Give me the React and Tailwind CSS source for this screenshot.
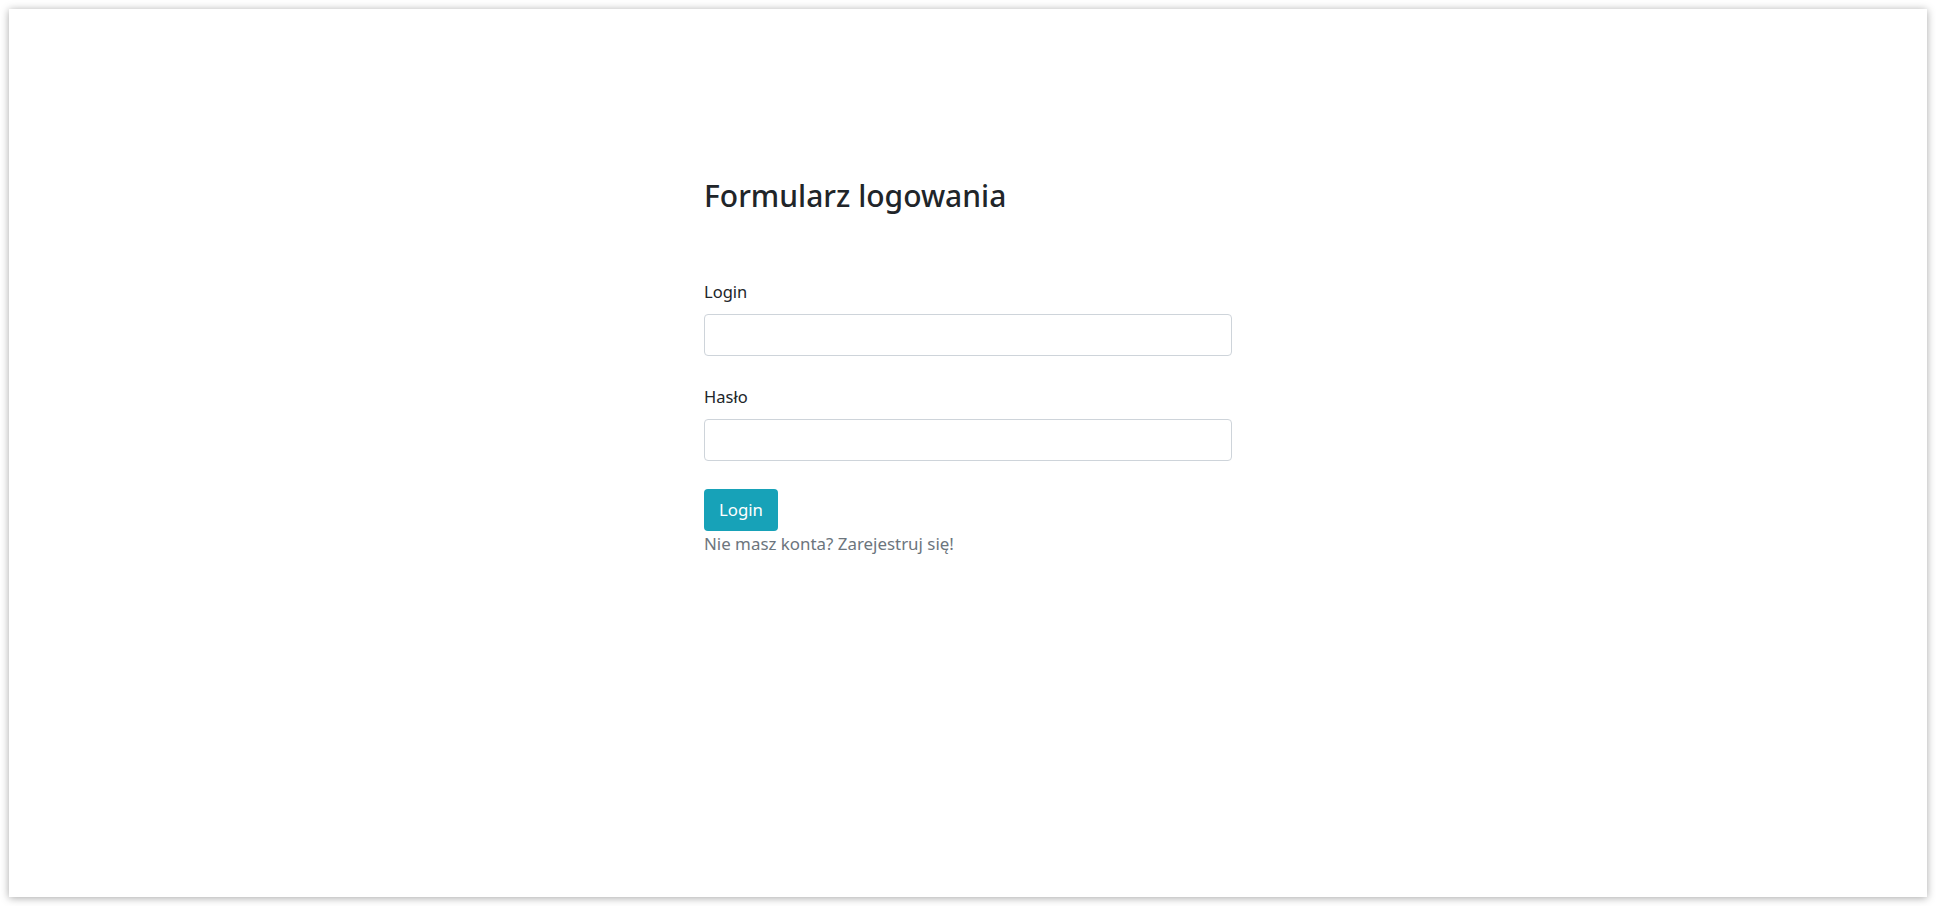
export default function App() {
  return (
    <div className="h-[906px] w-full bg-white p-[9px]" style={{ fontFamily: '"Noto Sans", "Open Sans", sans-serif' }}>
      <div className="h-full w-full bg-white shadow-[0_1px_8px_rgba(0,0,0,0.35)]">
        <form className="mx-auto w-[528px] pt-[168px]" onSubmit={(e) => e.preventDefault()}>
          <h3 className="text-[30px] leading-[37px] font-medium text-[#212529]">Formularz logowania</h3>

          <div className="mt-[65px]">
            <label className="block text-[16.5px] leading-[26px] text-[#212529]">Login</label>
            <input
              type="text"
              className="mt-[9px] block h-[42px] w-full rounded-[4px] border border-[#ced4da] bg-white px-3 outline-none"
            />
          </div>

          <div className="mt-[28px]">
            <label className="block text-[16.5px] leading-[26px] text-[#212529]">Hasło</label>
            <input
              type="password"
              className="mt-[9px] block h-[42px] w-full rounded-[4px] border border-[#ced4da] bg-white px-3 outline-none"
            />
          </div>

          <button
            type="submit"
            className="mt-[28px] h-[42px] rounded-[4px] bg-[#17a2b8] px-[15px] text-[16.8px] text-white"
          >
            Login
          </button>
          <div className="text-[16.9px] leading-[26px] text-[#6c757d]">Nie masz konta? Zarejestruj się!</div>
        </form>
      </div>
    </div>
  );
}
